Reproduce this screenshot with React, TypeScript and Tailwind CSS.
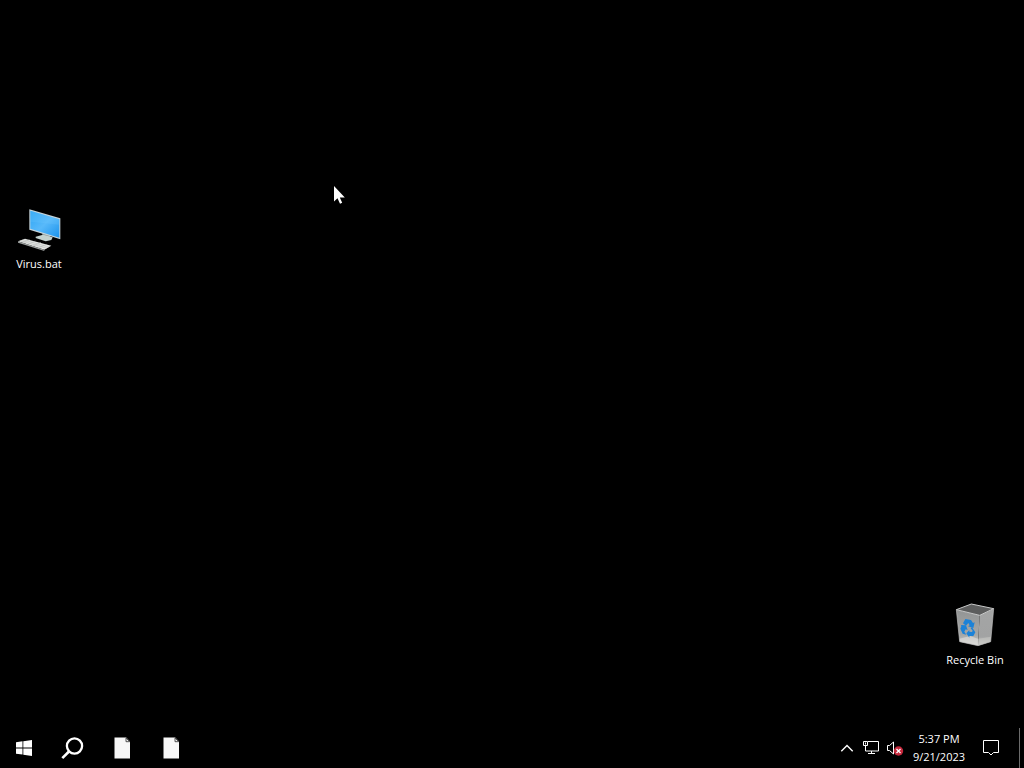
import type { FC, ReactNode } from "react";

type DesktopIconProps = {
  label: string;
  className: string;
  children: ReactNode;
};

const DesktopIcon: FC<DesktopIconProps> = ({ label, className, children }) => (
  <button
    className={`absolute flex w-[76px] flex-col items-center gap-1 text-[11px] leading-4 text-white ${className}`}
  >
    {children}
    <span className="whitespace-nowrap">{label}</span>
  </button>
);

const ComputerIcon = () => (
  <svg viewBox="0 -3 144 144" className="h-12 w-12" aria-hidden="true">
    <defs>
      <linearGradient id="screen" x1="0" y1="0" x2="1" y2="1">
        <stop offset="0" stopColor="#2ba4f4" />
        <stop offset="0.5" stopColor="#58b9fa" />
        <stop offset="1" stopColor="#1b93ec" />
      </linearGradient>
    </defs>
    <path d="M82 83l24 6v9l-24-5z" fill="#8d9998" />
    <path d="M62 95l22-6 29 8-4 8-17 4-30-10z" fill="#c3d2cf" />
    <path d="M43 13l93 27v63L43 74z" fill="#c5d3d9" />
    <path d="M46 17l87 26v55L46 71z" fill="url(#screen)" />
    <path d="M46 17l87 26v16L46 50z" fill="#7accff" opacity="0.2" />
    <path d="M9 109l21-8 79 21-21 12z" fill="#e3e5e3" />
    <path d="M9 109l79 25v4L9 113z" fill="#9b9f9e" />
    <path
      d="M16 107l80 23M23 104l79 22M22 113l22-9M38 118l23-10M54 123l24-11M71 128l24-10"
      stroke="#b5b9b7"
      strokeWidth="1.5"
    />
  </svg>
);

const RecycleBinIcon = () => (
  <svg viewBox="3 0 144 144" className="h-12 w-12" aria-hidden="true">
    <defs>
      <linearGradient id="binFront" x1="0" y1="0" x2="0" y2="1">
        <stop offset="0" stopColor="#929494" />
        <stop offset="0.7" stopColor="#a5a7a7" />
        <stop offset="1" stopColor="#d0d0ce" />
      </linearGradient>
      <linearGradient id="binSide" x1="0" y1="0" x2="0" y2="1">
        <stop offset="0" stopColor="#a4a5a5" />
        <stop offset="0.75" stopColor="#a2a3a3" />
        <stop offset="1" stopColor="#c4c4c2" />
      </linearGradient>
    </defs>
    <path d="M19 29l70 17-5 91-55-12z" fill="url(#binFront)" />
    <path d="M89 46l42-20-9 99-38 12z" fill="url(#binSide)" />
    <path d="M28 116l32-8 24 8-1 20-53-11z" fill="#e7e6e2" opacity="0.55" />
    <path d="M84 116l39-6-2 16-37 11z" fill="#dddcd8" opacity="0.35" />
    <path
      d="M19 29l45-17 67 14-42 20z"
      fill="#5c5d5d"
      stroke="#c9caca"
      strokeWidth="3"
      strokeLinejoin="round"
    />
    <path
      d="M19 29l10 96 55 12 38-12 9-99"
      fill="none"
      stroke="#bcbdbd"
      strokeWidth="2"
      strokeLinejoin="round"
    />
    <g fill="#1b82d8">
      <path d="M39 70l7-13 17 3 6 9 5-2-4 17-16-5 5-3-4-7-7 8z" />
      <path d="M33 75l15 1 5 14-6-2-4 7 6 9-11-3-7-15 3-7z" />
      <path d="M66 82l10 15-6 11-12 0v5l-9-13 9-10v5l8 1 2-4-6-7z" />
    </g>
  </svg>
);

const StartIcon = () => (
  <svg viewBox="0 0 16 16" className="h-4 w-4 fill-white" aria-hidden="true">
    <path d="M0 2.2l6.5-.9v6.2H0zM7.3 1.2L16 0v7.5H7.3zM0 8.4h6.5v6.2L0 13.7zM7.3 8.4H16V16l-8.7-1.2z" />
  </svg>
);

const SearchIcon = () => (
  <svg viewBox="1 0 24 24" className="h-6 w-6" fill="none" stroke="#fff" aria-hidden="true">
    <circle cx="14.5" cy="10" r="7.6" strokeWidth="2.3" />
    <path d="M9 15.5L2.300 22.200" strokeWidth="2.6" />
  </svg>
);

const FileIcon = () => (
  <svg viewBox="0 0 16 22" className="h-[22px] w-4" aria-hidden="true">
    <path d="M.5.5h11.700L16 4.500v17H.5z" fill="#f7f7f7" />
    <path d="M12 1v3.700h3.700z" fill="#eee" stroke="#444" strokeWidth="0.9" />
  </svg>
);

const ChevronIcon = () => (
  <svg viewBox="0 0 16 16" className="h-4 w-4" fill="none" aria-hidden="true">
    <path d="M2.300 11.200L8 5.500l5.700 5.700" stroke="#fff" strokeWidth="1.400" />
  </svg>
);

const NetworkIcon = () => (
  <svg viewBox="0 0 16 16" className="h-4 w-4" fill="none" stroke="#fff" aria-hidden="true">
    <path d="M5 1.500h10.500v9.500H2.500V6M8.500 11v2.500M5 13.500h7" />
    <path d="M.500 1.500h4v4h-4zM2.500 2.500v2" />
  </svg>
);

const MutedIcon = () => (
  <svg viewBox="0 0 18 16" className="h-4 w-[18px]" fill="none" aria-hidden="true">
    <path d="M1.500 5.500h2L7.500 2v12l-4-3.500h-2z" stroke="#fff" />
    <circle cx="12.500" cy="11" r="4.700" fill="#c5283c" />
    <path d="M10.500 9l4 4M14.500 9l-4 4" stroke="#fff" strokeWidth="1.300" />
  </svg>
);

const NotificationIcon = () => (
  <svg viewBox="0 0 16 16" className="h-4 w-4" fill="none" aria-hidden="true">
    <path d="M.5.5h15v12H10.500L8 15l-2.500-2.500h-5z" stroke="#fff" />
  </svg>
);

const Cursor = () => (
  <svg
    viewBox="0 0 12 19"
    className="pointer-events-none absolute left-[334px] top-[186px] h-[19px] w-3"
    aria-hidden="true"
  >
    <path d="M0 0v15.500l3.500-3.300L6 17.800l2.200-1-2.400-5.400h5z" fill="#fff" />
  </svg>
);

const Taskbar = () => (
  <footer className="flex h-10 items-stretch bg-black text-[11px] text-white">
    <nav className="flex gap-px">
      <button aria-label="Start" className="grid w-12 place-items-center">
        <StartIcon />
      </button>
      <button aria-label="Search" className="grid w-12 place-items-center">
        <SearchIcon />
      </button>
      <button aria-label="Document 1" className="grid w-12 place-items-center">
        <FileIcon />
      </button>
      <button aria-label="Document 2" className="grid w-12 place-items-center">
        <FileIcon />
      </button>
    </nav>
    <div className="ml-auto flex">
      <button aria-label="Show hidden icons" className="grid w-6 place-items-center">
        <ChevronIcon />
      </button>
      <button aria-label="Network" className="grid w-6 place-items-center">
        <NetworkIcon />
      </button>
      <button aria-label="Volume muted" className="grid w-6 place-items-center">
        <MutedIcon />
      </button>
      <button className="flex w-16 flex-col items-center justify-center leading-[18px]">
        <span>5:37 PM</span>
        <span>9/21/2023</span>
      </button>
      <button aria-label="Notifications" className="mr-2 grid w-10 place-items-center">
        <NotificationIcon />
      </button>
      <button aria-label="Show desktop" className="w-[5px] border-l border-[#6b6b6b]" />
    </div>
  </footer>
);

const App = () => (
  <div className="flex min-h-screen flex-col overflow-hidden bg-black font-['Open_Sans','Noto_Sans',sans-serif]">
    <main className="relative grow">
      <DesktopIcon label="Virus.bat" className="left-px top-[204px]">
        <ComputerIcon />
      </DesktopIcon>
      <DesktopIcon label="Recycle Bin" className="bottom-[60px] right-[11px]">
        <RecycleBinIcon />
      </DesktopIcon>
      <Cursor />
    </main>
    <Taskbar />
  </div>
);

export default App;
